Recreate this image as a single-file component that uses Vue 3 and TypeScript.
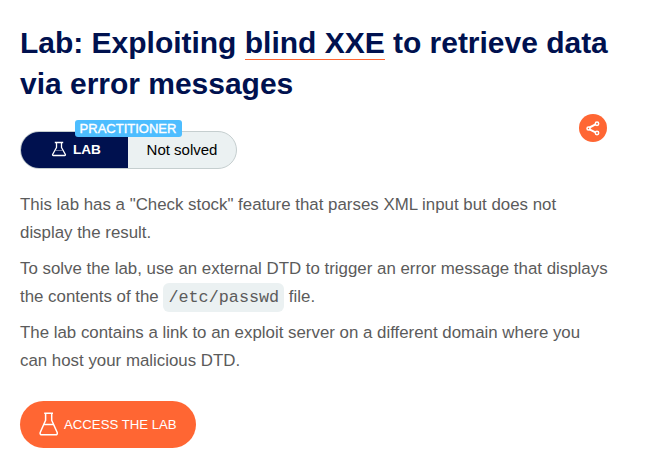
<script setup lang="ts">
const difficulty: string = 'PRACTITIONER'
const status: string = 'Not solved'
</script>

<template>
  <main class="page">
    <h1>Lab: Exploiting <a class="term">blind XXE</a> to retrieve data<br />via error messages</h1>
    <div class="meta">
      <div class="status">
        <span class="lab">
          <svg width="16" height="16" viewBox="0 0 16 16" fill="none" stroke="#fff" stroke-width="1.3" stroke-linejoin="round"><path d="M3.800 1.500h8.400M5.500 1.500v5L1.600 13.500Q1.300 14.500 2.300 14.500h11.400Q14.700 14.500 14.400 13.500L10.500 6.500V1.500" /><path d="M4.500 9.500h7" stroke-width=".7" stroke-opacity=".6" /></svg>
          <b>LAB</b>
        </span>
        <span class="state">{{ status }}</span>
        <span class="level">{{ difficulty }}</span>
      </div>
      <button class="share" aria-label="Share">
        <svg width="28" height="28" viewBox="0 0 28 28" fill="none" stroke="#fff" stroke-width="1.500"><path d="M16.500 10.300L10.500 13.500M10.500 15.300L16.500 18.300" stroke-width="2" /><circle cx="18" cy="9.800" r="1.700" /><circle cx="9.500" cy="14.500" r="1.500" /><circle cx="18" cy="19" r="1.700" /></svg>
      </button>
    </div>
    <p>This lab has a "Check stock" feature that parses XML input but does not<br />display the result.</p>
    <p>To solve the lab, use an external DTD to trigger an error message that displays<br />the contents of the <code>/etc/passwd</code> file.</p>
    <p>The lab contains a link to an exploit server on a different domain where you<br />can host your malicious DTD.</p>
    <button class="access">
      <svg width="20" height="24" viewBox="0 0 20 24" fill="none" stroke="#fff" stroke-width="1.500" stroke-linejoin="round"><path d="M5.200 1.300h8.800M6.600 1.300v7L1.200 20.500Q.6 22.800 3 22.800h13.500Q18.800 22.800 18.200 20.500L12.700 8.300V1.300" /><path d="M4.500 12.500h10.500" /></svg>
      <span>ACCESS THE LAB</span>
    </button>
  </main>
</template>

<style>
body { background: #fff; }
</style>

<style scoped>
.page { box-sizing: border-box; width: 646px; height: 455px; padding: 22px 20px 0; overflow: hidden; font-family: "Liberation Sans", Arial, sans-serif; color: #5b5b5b; white-space: nowrap; }
h1 { margin: 0; font-size: 30px; line-height: 41px; font-weight: 700; letter-spacing: -0.015px; color: #00114f; }
.term { border-bottom: 1px solid #ff6633; }
.meta { display: flex; justify-content: space-between; width: 587px; margin-top: 10px; height: 77px; }
.status { position: relative; box-sizing: border-box; display: flex; width: 217px; height: 38px; margin-top: 17px; border: 1px solid #c5cecf; border-radius: 19px; background: #ebf1f2; color: #000; font-size: 15px; }
.lab { display: flex; align-items: center; gap: 6px; box-sizing: border-box; width: 107px; padding: 0 0 2px 30px; border-radius: 18px 0 0 18px; background: #00114f; color: #fff; font-size: 13.6px; }
.state { flex: 1; text-align: center; line-height: 36px; }
.level { position: absolute; left: 54px; top: -12px; width: 107px; height: 17px; border-radius: 3px; background: #4dbdff; color: #fff; font-size: 13px; line-height: 17px; text-align: center; text-indent: -1px; -webkit-text-stroke: 0.35px #fff; }
button { border: 0; padding: 0; background: #ff6633; color: #fff; font-family: inherit; }
.share { width: 28px; height: 28px; border-radius: 50%; }
.share svg { display: block; }
p { margin: 0 0 8px; font-size: 16.86px; line-height: 28px; }
code { padding: 5px; border-radius: 6px; background: #ebf1f2; font-family: "Liberation Mono", monospace; font-size: 16.8px; line-height: 1; }
.access { display: flex; align-items: center; gap: 5px; width: 176px; height: 47px; margin-top: 26px; padding-left: 19px; border-radius: 24px; font-size: 13.2px; }
.access svg { position: relative; top: -1px; }
</style>
